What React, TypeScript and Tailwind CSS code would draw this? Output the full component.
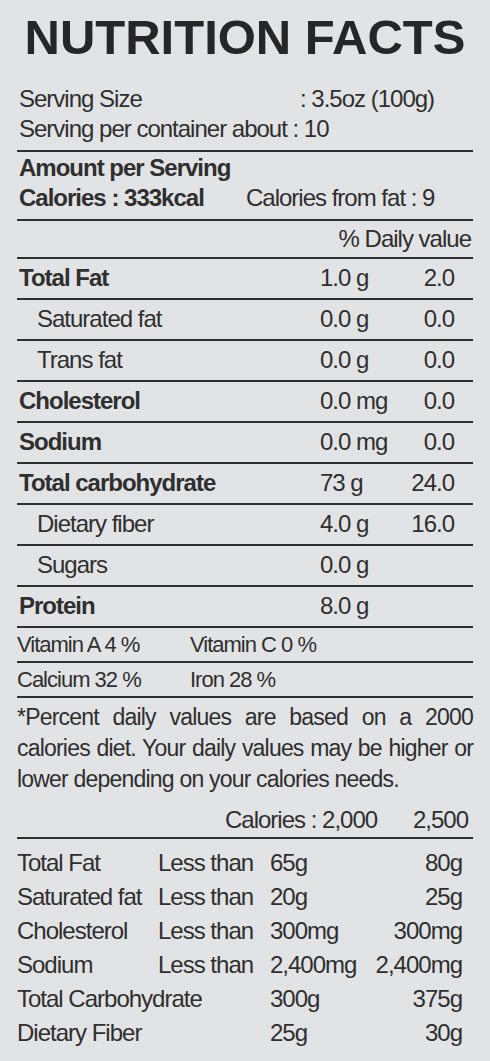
import React from 'react';

export default function App() {
    const nutrients = [
        { name: "Total Fat", bold: true, amount: "1.0 g", dv: "2.0" },
        { name: "Saturated fat", indent: true, amount: "0.0 g", dv: "0.0" },
        { name: "Trans fat", indent: true, amount: "0.0 g", dv: "0.0" },
        { name: "Cholesterol", bold: true, amount: "0.0 mg", dv: "0.0" },
        { name: "Sodium", bold: true, amount: "0.0 mg", dv: "0.0" },
        { name: "Total carbohydrate", bold: true, amount: "73 g", dv: "24.0" },
        { name: "Dietary fiber", indent: true, amount: "4.0 g", dv: "16.0" },
        { name: "Sugars", indent: true, amount: "0.0 g", dv: "" },
        { name: "Protein", bold: true, amount: "8.0 g", dv: "" },
    ];

    const vitamins = [
        ["Vitamin A 4 %", "Vitamin C 0 %"],
        ["Calcium 32 %", "Iron 28 %"],
    ];

    const limits = [
        { name: "Total Fat", less: "Less than", a: "65g", b: "80g" },
        { name: "Saturated fat", less: "Less than", a: "20g", b: "25g" },
        { name: "Cholesterol", less: "Less than", a: "300mg", b: "300mg" },
        { name: "Sodium", less: "Less than", a: "2,400mg", b: "2,400mg" },
        { name: "Total Carbohydrate", less: "", a: "300g", b: "375g" },
        { name: "Dietary Fiber", less: "", a: "25g", b: "30g" },
    ];

    return (
        <div className="min-h-screen w-[490px] bg-[#e2e3e5] text-[#2f2f2f] font-['Liberation_Sans',Arial,sans-serif] px-[17px] overflow-hidden">
            {/* Title */}
            <h1 className="pt-[13px] text-center text-[49px] leading-[49px] font-bold text-[#262626]">NUTRITION FACTS</h1>

            {/* Serving */}
            <div className="mt-[22px] pb-[6px] border-b-2 border-[#2f2f2f] text-[24px] leading-[30px] tracking-[-1px] pl-[2px]">
                <div className="flex">
                    <span className="w-[281px]">Serving Size</span>
                    <span>: 3.5oz (100g)</span>
                </div>
                <div className="whitespace-nowrap">Serving per container about : 10</div>
            </div>

            {/* Amount per serving */}
            <div className="pt-[1px] pb-[6px] border-b-2 border-[#2f2f2f] text-[24px] leading-[30px] tracking-[-1px] pl-[2px]">
                <div className="font-bold">Amount per Serving</div>
                <div className="flex whitespace-nowrap">
                    <span className="w-[227px] font-bold">Calories : 333kcal</span>
                    <span>Calories from fat : 9</span>
                </div>
            </div>

            <div className="h-[38px] leading-[36px] text-[24px] tracking-[-1px] text-right pr-[2px] border-b-2 border-[#2f2f2f]">% Daily value</div>

            {/* Nutrient rows */}
            {nutrients.map((n, i) => (
                <div key={i} className="flex h-[41px] leading-[38px] text-[24px] tracking-[-1px] whitespace-nowrap border-b-2 border-[#2f2f2f] pr-[19px]">
                    <span className={`w-[303px] ${n.indent ? "pl-[20px]" : "pl-[2px]"} ${n.bold ? "font-bold" : ""}`}>{n.name}</span>
                    <span className="flex-1">{n.amount}</span>
                    <span className="w-[60px] text-right">{n.dv}</span>
                </div>
            ))}

            {/* Vitamins */}
            {vitamins.map((v, i) => (
                <div key={i} className="flex h-[35px] leading-[33px] text-[22px] tracking-[-1px] whitespace-nowrap border-b-2 border-[#2f2f2f]">
                    <span className="w-[173px]">{v[0]}</span>
                    <span>{v[1]}</span>
                </div>
            ))}

            {/* Footnote */}
            <p className="pt-[4px] text-[23px] leading-[31px] tracking-[-0.8px] text-justify">
                *Percent daily values are based on a 2000 calories diet. Your daily values may be higher or lower depending on your calories needs.
            </p>

            <div className="mt-[10px] pb-[2px] flex whitespace-nowrap text-[24px] leading-[30px] tracking-[-1px] border-b-2 border-[#2f2f2f]">
                <span className="pl-[208px]">Calories : 2,000</span>
                <span className="flex-1 text-right pr-[5px]">2,500</span>
            </div>

            {/* Daily limits */}
            <div className="pt-[7px] text-[24px] leading-[34px] tracking-[-1px]">
                {limits.map((l, i) => (
                    <div key={i} className="flex whitespace-nowrap pr-[11px]">
                        <span className="w-[141px]">{l.name}</span>
                        <span className="w-[112px]">{l.less}</span>
                        <span className="flex-1">{l.a}</span>
                        <span className="text-right">{l.b}</span>
                    </div>
                ))}
            </div>
        </div>
    );
}
